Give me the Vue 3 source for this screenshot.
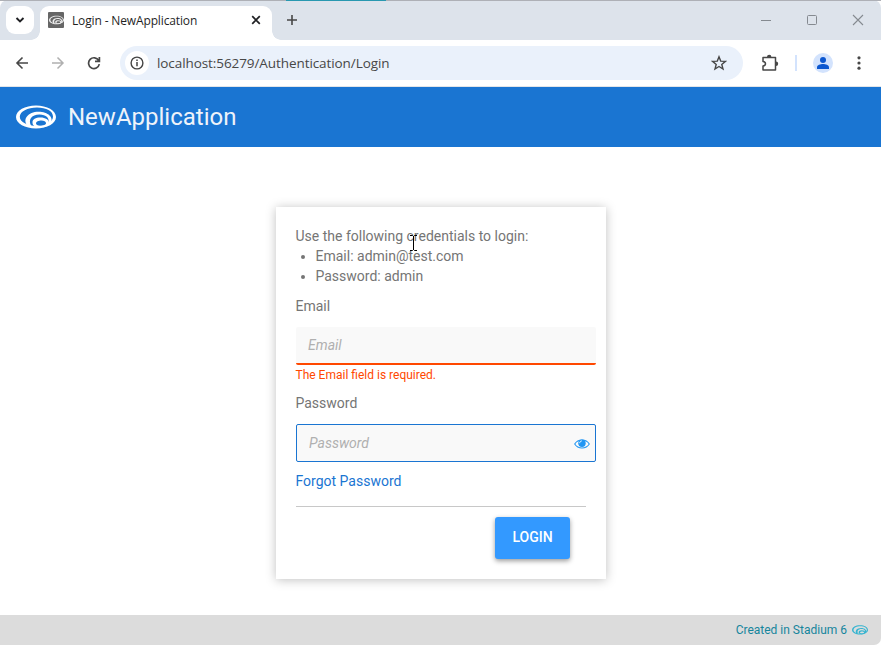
<script setup>
import { ref } from 'vue'

const address = ref('localhost:56279/Authentication/Login')
const title = 'NewApplication'
const credentials = ['Email: admin@test.com', 'Password: admin']
</script>

<template>
  <div class="window">
    <svg class="defs" width="0" height="0" aria-hidden="true">
      <symbol id="stadium" viewBox="0 0 40 24">
        <path fill-rule="evenodd" fill="currentColor" d="M20 .4C31 .4 40 5.400 40 12S31 23.400 20 23.400 0 18.600 0 12 9 .4 20 .4ZM21 2.400C11.500 2.400 3.800 6.300 3.800 11.800S11.500 20.900 21 20.900 37 17 37 11.500 30.500 2.400 21 2.400Z" />
        <path fill="currentColor" d="M11.500 20.800C6 14.500 12 6.800 22.500 6.800C32 6.800 38.500 12.500 34.500 19L32 18.800C34.500 13.500 30 9.600 23.500 9.600C15.500 9.600 11.500 15 15.500 21.300Z" />
        <path fill-rule="evenodd" fill="currentColor" d="M24.500 12.500C29.500 12.500 33 14.800 33 17.800S29.500 22.500 24.500 22.500 16.500 20.700 16.500 17.500 19.500 12.500 24.500 12.500ZM25.500 15.600C22.500 15.600 20 16.900 20 18.500S22.500 21 25.500 21 30 19.900 30 18.300 28 15.600 25.500 15.600Z" />
      </symbol>
    </svg>

    <div class="tabstrip">
      <div class="backdrop-line"><i></i></div>
      <button class="tab-search" aria-label="Search tabs">
        <svg width="10" height="6" viewBox="0 0 10 6"><path d="m1.500 1 3.500 3.500L8.500 1" fill="none" stroke="#202124" stroke-width="1.900" /></svg>
      </button>
      <div class="tab">
        <span class="favicon"><svg width="15" height="10"><use href="#stadium" /></svg></span>
        <span class="tab-title">Login - {{ title }}</span>
        <svg class="tab-close" width="10" height="10" viewBox="0 0 10 10"><path d="m1.200 1.200 7.600 7.600m0-7.600-7.600 7.600" stroke="#202124" stroke-width="1.700" /></svg>
      </div>
      <svg class="new-tab" width="12" height="12" viewBox="0 0 12 12"><path d="M6 1v10M1 6h10" stroke="#474747" stroke-width="1.600" /></svg>
      <div class="window-buttons">
        <svg width="12" height="12" viewBox="0 0 12 12"><path d="M1 6.500h10" stroke="#858a90" /></svg>
        <svg width="12" height="12" viewBox="0 0 12 12"><rect x="1.500" y="1.500" width="9" height="9" rx="1" fill="none" stroke="#858a90" /></svg>
        <svg width="12" height="12" viewBox="0 0 12 12"><path d="m1 1 10 10M11 1 1 11" stroke="#858a90" stroke-width="1.100" /></svg>
      </div>
    </div>

    <div class="toolbar">
      <svg class="back" width="14" height="14" viewBox="0 0 14 14"><path d="M13 7H2m5.500-5.500L2 7l5.500 5.500" fill="none" stroke="#474747" stroke-width="1.600" /></svg>
      <svg class="forward" width="14" height="14" viewBox="0 0 14 14"><path d="M1 7h11M6.500 1.500 12 7l-5.500 5.500" fill="none" stroke="#b0b0b0" stroke-width="1.500" /></svg>
      <svg class="reload" width="14" height="14" viewBox="0 0 14 14"><path d="M11.700 4.500A5.400 5.400 0 1 0 12.300 8.200M12.400 1v4.300H8" fill="none" stroke="#474747" stroke-width="1.700" /></svg>
      <div class="omnibox">
        <span class="info">
          <svg width="14" height="14" viewBox="0 0 14 14"><circle cx="7" cy="7" r="5.900" fill="none" stroke="#444" stroke-width="1.400" /><path d="M7 6v4.300M7 3.500v1.500" stroke="#444" stroke-width="1.500" /></svg>
        </span>
        <span class="url">{{ address }}</span>
        <svg class="star" width="16" height="16" viewBox="0 0 16 16"><path d="m8 1.800 1.700 4.300 4.700.3-3.600 3 1.200 4.600L8 11.500 4 14l1.200-4.600-3.600-3 4.700-.3Z" fill="none" stroke="#474747" stroke-width="1.400" /></svg>
      </div>
      <svg class="puzzle" width="18" height="18" viewBox="0 0 18 18"><path d="M2 3.500h12.500v12.500H2v-4c3.300-.3 3.300-4.200 0-4.500Z" fill="none" stroke="#474747" stroke-width="1.500" stroke-linejoin="round" /><path d="M6 3a2.200 2.200 0 0 1 4.400 0M15 7.500a2.200 2.200 0 0 1 0 4.400" fill="#474747" /></svg>
      <span class="divider"></span>
      <svg class="avatar" width="20" height="20" viewBox="0 0 20 20"><circle cx="10" cy="10" r="10" fill="#d3e3fd" /><circle cx="10" cy="7" r="3" fill="#0b57d0" /><path d="M4 16v-1.800C4 12 7.500 11 10 11s6 1 6 3.200V16Z" fill="#0b57d0" /></svg>
      <svg class="dots" width="4" height="14" viewBox="0 0 4 14"><g fill="#474747"><circle cx="2" cy="1.800" r="1.600" /><circle cx="2" cy="7" r="1.600" /><circle cx="2" cy="12.200" r="1.600" /></g></svg>
    </div>

    <header class="app-header">
      <svg class="logo" width="40" height="24"><use href="#stadium" /></svg>
      <h1>{{ title }}</h1>
    </header>

    <main>
      <form class="card" @submit.prevent>
        <div class="intro">Use the following credentials to login:
          <ul><li v-for="line in credentials" :key="line">{{ line }}</li></ul>
        </div>
        <label for="email">Email</label>
        <input id="email" class="field invalid" type="text" placeholder="Email" />
        <div class="error">The Email field is required.</div>
        <label for="password">Password</label>
        <div class="field focused">
          <input id="password" type="password" placeholder="Password" />
          <svg width="16" height="12" viewBox="0 0 16 12"><path d="M.7 6C4 .7 12 .7 15.300 6 12 11.300 4 11.300.7 6Z" fill="none" stroke="#2196f3" stroke-width="1.100" /><circle cx="8" cy="5.300" r="3.700" fill="#2196f3" /><path d="M5.700 5.200c0-1.400.8-2.200 2.100-2.300" stroke="#fff" stroke-width=".9" fill="none" /></svg>
        </div>
        <a class="forgot">Forgot Password</a>
        <div class="actions"><button class="login">LOGIN</button></div>
        <svg class="pointer" width="9" height="16" viewBox="0 0 9 16"><path d="M1 .5h2.500l1 1 1-1H8M4.500 1v14M1 15.500h2.500l1-1 1 1H8" fill="none" stroke="#000" /></svg>
      </form>
    </main>

    <footer>
      <span>Created in Stadium 6</span>
      <svg width="16" height="10"><use href="#stadium" /></svg>
    </footer>
  </div>
</template>

<style>
body { margin: 0; overflow: hidden; }
</style>

<style scoped>
* { box-sizing: border-box; }
.window { width: 881px; height: 645px; display: flex; flex-direction: column; background: #fff; font: 14px/20px Roboto, sans-serif; color: #757575; overflow: hidden; border-bottom-right-radius: 7px; }
.defs { position: absolute; }
svg { display: block; flex: none; }
button { border: 0; padding: 0; font: inherit; }
.tabstrip { position: relative; height: 40px; flex: none; display: flex; align-items: center; background: #dde3eb; padding-left: 6px; border-radius: 8px 8px 0 0; }
.backdrop-line { position: absolute; top: 0; left: 0; right: 0; height: 1px; background: #aeb0b6; padding-left: 286px; }
.backdrop-line i { display: block; width: 100px; height: 1px; background: #2898b0; }
.tab-search { width: 28px; height: 28px; border-radius: 9px; background: #fff; display: flex; align-items: center; justify-content: center; }
.tab { position: relative; width: 232px; height: 34px; margin: 6px 0 0 6px; padding: 0 11px 6px 8px; background: #fff; border-radius: 9px 9px 0 0; display: flex; align-items: center; }
.tab::before, .tab::after { content: ''; position: absolute; bottom: 0; width: 9px; height: 9px; }
.tab::before { left: -9px; background: radial-gradient(circle at 0 0, transparent 8.5px, #fff 9px); }
.tab::after { right: -9px; background: radial-gradient(circle at 100% 0, transparent 8.5px, #fff 9px); }
.favicon { width: 16px; height: 16px; border-radius: 1px; background: #666; color: #eee; display: flex; align-items: center; justify-content: center; }
.tab-title { margin: 1px 0 0 8px; font: 12px/16px "Open Sans", sans-serif; letter-spacing: -.14px; color: #1f1f1f; flex: 1; white-space: nowrap; }
.new-tab { margin-left: 14px; }
.window-buttons { display: flex; gap: 34px; margin-left: auto; padding-right: 17px; }
.toolbar { height: 47px; flex: none; background: #fff; border-bottom: 1px solid #e2e5e9; display: flex; align-items: center; padding-left: 15px; }
.forward { margin-left: 22px; }
.reload { margin-left: 22px; }
.omnibox { width: 623px; height: 34px; margin-left: 19px; border-radius: 17px; background: #eaf1fb; display: flex; align-items: center; padding: 0 16px 0 5px; }
.info { width: 24px; height: 24px; border-radius: 50%; background: #fff; display: flex; align-items: center; justify-content: center; }
.url { margin-left: 8px; font: 13.500px/20px "Open Sans", sans-serif; letter-spacing: -.08px; color: #474747; flex: 1; }
.puzzle { margin-left: 18px; }
.divider { width: 2px; height: 16px; background: #d3e3fd; margin-left: 16px; }
.avatar { margin-left: 16px; }
.dots { margin-left: 24px; }
.app-header { height: 60px; flex: none; background: #1a75d2; color: #fff; display: flex; align-items: center; padding-left: 16px; }
.app-header h1 { margin: 0 0 0 12px; font: 400 24px/32px Roboto, sans-serif; color: #eef3fa; }
main { flex: 1; min-height: 0; display: flex; justify-content: center; align-items: flex-start; padding-top: 60px; }
.card { position: relative; width: 330px; height: 372px; padding: 19px 10px 0 20px; background: #fff; box-shadow: 0 1px 10px rgba(0, 0, 0, .25); display: flex; flex-direction: column; }
ul { margin: 0; padding-left: 20px; }
label { margin-top: 10px; }
.field { width: 300px; height: 38px; margin-top: 11px; flex: none; background: #f9f9f9; border: 0; border-radius: 2px; font: 14px/20px Roboto, sans-serif; }
.invalid { padding: 0 12.5px; border-bottom: 2px solid #ff4800; }
input { outline: none; color: #757575; }
input::placeholder { font-style: italic; color: #b0b0b0; opacity: 1; }
.error { margin-top: 2px; height: 16px; font-size: 12px; line-height: 16px; color: #ff4800; }
.error + label { margin-top: 10px; }
.focused { border: 1px solid #1a75d2; display: flex; align-items: center; padding: 0 4.5px 0 12.5px; }
.focused input { border: 0; padding: 0; background: none; flex: 1; min-width: 0; font: inherit; }
.focused svg { margin-top: 2px; }
.forgot { margin-top: 9px; color: #1a75d2; }
.actions { width: 290px; margin-top: 15px; padding: 10px 16px 0 0; border-top: 1px solid #c8c8c8; display: flex; justify-content: flex-end; }
.login { width: 75px; height: 42px; padding: 0 0 2px 1px; border-radius: 3px; background: #3399ff; color: #fff; font-weight: 500; box-shadow: 0 2px 5px rgba(0, 0, 0, .4); }
.pointer { position: absolute; left: 133px; top: 28px; }
footer { height: 30px; flex: none; background: #dcdcdc; display: flex; align-items: center; justify-content: flex-end; gap: 5px; padding-right: 13px; font-size: 12px; color: #16859c; }
footer svg { color: #35b4d0; }
</style>
